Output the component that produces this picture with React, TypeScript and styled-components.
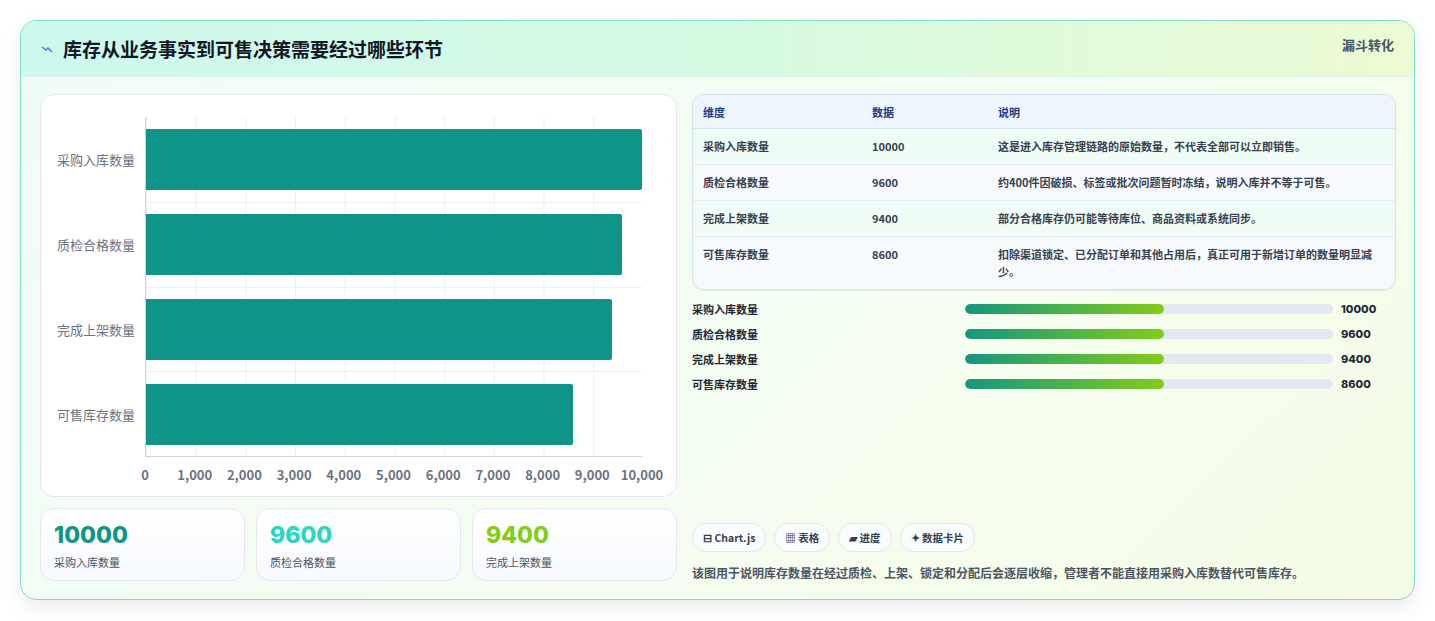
import styled, { createGlobalStyle } from 'styled-components';

const GlobalStyle = createGlobalStyle`
  html, body { margin: 0; padding: 0; background: #f3f4f6; }
  body { font-family: "Noto Sans CJK SC", "Noto Sans", sans-serif; color: #1f2937; }
`;

const rows = [
  { name: '采购入库数量', value: 10000, note: '这是进入库存管理链路的原始数量，不代表全部可以立即销售。' },
  { name: '质检合格数量', value: 9600, note: '约400件因破损、标签或批次问题暂时冻结，说明入库并不等于可售。' },
  { name: '完成上架数量', value: 9400, note: '部分合格库存仍可能等待库位、商品资料或系统同步。' },
  { name: '可售库存数量', value: 8600, note: '扣除渠道锁定、已分配订单和其他占用后，真正可用于新增订单的数量明显减少。' },
];

const ticks = [0, 1000, 2000, 3000, 4000, 5000, 6000, 7000, 8000, 9000, 10000];
const stats = [
  { v: '10000', label: '采购入库数量', color: '#0f9488' },
  { v: '9600', label: '质检合格数量', color: '#2dd4bf' },
  { v: '9400', label: '完成上架数量', color: '#84cc16' },
];

const Page = styled.div`
  background: #fff;
  padding: 20px 20px 21px 20px;
`;

const Card = styled.div`
  border: 1px solid #7fdcc9;
  border-radius: 16px;
  overflow: hidden;
  background: linear-gradient(135deg, #effcf9 0%, #f4fdf0 60%, #f5fde6 100%);
  box-shadow: 0 8px 20px rgba(0, 0, 0, 0.08);
`;

const Header = styled.div`
  height: 55px;
  display: flex;
  align-items: center;
  justify-content: space-between;
  padding: 0 20px 0 20px;
  background: linear-gradient(90deg, #cdf8ee 0%, #d7fae0 55%, #ecfbd3 100%);
  border-bottom: 1px solid #dff3ea;
`;

const Title = styled.h1`
  margin: 0;
  font-size: 19px;
  font-weight: 700;
  color: #111827;
  display: flex;
  align-items: center;
  gap: 10px;
`;

const Tag = styled.span`
  align-self: flex-start;
  margin-top: 14px;
  font-size: 13px;
  font-weight: 700;
  color: #475569;
`;

const Body = styled.div`
  display: grid;
  grid-template-columns: 637px 704px;
  gap: 15px;
  padding: 17px 19px 18px 19px;
`;

const Column = styled.div`
  display: flex;
  flex-direction: column;
`;

const ChartBox = styled.div`
  height: 403px;
  box-sizing: border-box;
  background: #fff;
  border: 1px solid #e5e7eb;
  border-radius: 14px;
  padding: 22px 34px 0 14px;
  display: grid;
  grid-template-columns: 90px 497px;
  grid-template-rows: 340px 30px;
`;

const YLabels = styled.div`
  display: grid;
  grid-template-rows: repeat(4, 1fr);
  font-size: 13px;
  color: #6b7280;
  text-align: right;
  padding-right: 10px;
`;

const YLabel = styled.div`
  display: flex;
  align-items: center;
  justify-content: flex-end;
`;

const Plot = styled.div`
  position: relative;
  border-left: 1px solid #d1d5db;
  border-bottom: 1px solid #d1d5db;
  display: grid;
  grid-template-rows: repeat(4, 1fr);
  background-image: linear-gradient(90deg, #eceef1 1px, transparent 1px);
  background-size: 49.7px 100%;
`;

const BarRow = styled.div`
  display: flex;
  align-items: center;
  border-top: 1px solid #eceef1;
  &:first-child { border-top: none; }
`;

const Bar = styled.div`
  height: 61px;
  background: #0e9488;
  border-radius: 0 2px 2px 0;
`;

const XLabels = styled.div`
  grid-column: 2;
  position: relative;
  font-size: 13px;
  font-weight: 700;
  color: #6b7280;
`;

const Tick = styled.span`
  position: absolute;
  top: 8px;
  transform: translateX(-50%);
`;

const Stats = styled.div`
  display: grid;
  grid-template-columns: repeat(3, 205px);
  gap: 11px;
  margin-top: 11px;
`;

const Stat = styled.div`
  height: 73px;
  box-sizing: border-box;
  border: 1px solid #e5e7eb;
  border-radius: 14px;
  background: linear-gradient(180deg, #ffffff, #f6f9fe);
  padding: 12px 13px;
`;

const StatValue = styled.div<{ $color: string }>`
  font-size: 23px;
  font-weight: 800;
  font-family: "Inter", "Noto Sans", sans-serif;
  color: ${(p) => p.$color};
  line-height: 28px;
`;

const StatLabel = styled.div`
  font-size: 11px;
  color: #4b5563;
  margin-top: 5px;
`;

const Table = styled.table`
  width: 100%;
  border-collapse: separate;
  border-spacing: 0;
  border: 1px solid #cfe3ea;
  border-radius: 12px;
  overflow: hidden;
  font-size: 11px;
  box-shadow: 0 1px 2px rgba(0,0,0,0.06);
  th {
    text-align: left;
    background: #edf5fd;
    color: #1e3a8a;
    font-weight: 700;
    height: 33px;
    padding: 0 10px;
    border-bottom: 1px solid #d6e2ee;
  }
  td {
    padding: 9px 10px;
    font-weight: 600;
    color: #374151;
    vertical-align: top;
    line-height: 17px;
    border-bottom: 1px solid #e3ebf2;
  }
  tr:last-child td { border-bottom: none; }
  tbody tr:nth-child(odd) { background: #f0fdf6; }
  tbody tr:nth-child(even) { background: #f7fafd; }
`;

const Progress = styled.div`
  margin-top: 10px;
  display: flex;
  flex-direction: column;
  gap: 7px;
`;

const ProgressRow = styled.div`
  display: grid;
  grid-template-columns: 265px 368px auto;
  align-items: center;
  gap: 8px;
  font-size: 11px;
  font-weight: 600;
  color: #1f2937;
  height: 18px;
`;

const Track = styled.div`
  height: 10px;
  background: #e2e8f0;
  border-radius: 5px;
  overflow: hidden;
`;

const Fill = styled.div`
  height: 100%;
  width: 54%;
  border-radius: 5px;
  background: linear-gradient(90deg, #159680, #83cc19);
`;

const PVal = styled.span`
  font-weight: 800;
  font-family: "Inter", sans-serif;
`;

const Chips = styled.div`
  margin-top: auto;
  display: flex;
  gap: 8px;
`;

const Chip = styled.span`
  height: 27px;
  padding: 0 10px;
  display: inline-flex;
  align-items: center;
  gap: 4px;
  border: 1px solid #e5e7eb;
  border-radius: 14px;
  background: #fafbfd;
  font-size: 10.5px;
  font-weight: 700;
  color: #334155;
`;

const Note = styled.p`
  margin: 12px 0 0;
  font-size: 12px;
  font-weight: 600;
  color: #4b5563;
`;

export default function App() {
  return (
    <Page>
      <GlobalStyle />
      <Card>
        <Header>
          <Title>
            <svg width="12" height="8" viewBox="0 0 12 8">
              <path d="M1 2 L5 5 L7 3 L11 7" stroke="#3b82f6" strokeWidth="1.5" fill="none" />
            </svg>
            库存从业务事实到可售决策需要经过哪些环节
          </Title>
          <Tag>漏斗转化</Tag>
        </Header>
        <Body>
          <Column>
            <ChartBox>
              <YLabels>
                {rows.map((r) => <YLabel key={r.name}>{r.name}</YLabel>)}
              </YLabels>
              <Plot>
                {rows.map((r) => (
                  <BarRow key={r.name}>
                    <Bar style={{ width: `${r.value / 100}%` }} />
                  </BarRow>
                ))}
              </Plot>
              <XLabels>
                {ticks.map((t) => (
                  <Tick key={t} style={{ left: `${t / 100}%` }}>{t.toLocaleString('en-US')}</Tick>
                ))}
              </XLabels>
            </ChartBox>
            <Stats>
              {stats.map((s) => (
                <Stat key={s.label}>
                  <StatValue $color={s.color}>{s.v}</StatValue>
                  <StatLabel>{s.label}</StatLabel>
                </Stat>
              ))}
            </Stats>
          </Column>
          <Column>
            <Table>
              <colgroup>
                <col style={{ width: 169 }} />
                <col style={{ width: 126 }} />
                <col />
              </colgroup>
              <thead>
                <tr><th>维度</th><th>数据</th><th>说明</th></tr>
              </thead>
              <tbody>
                {rows.map((r) => (
                  <tr key={r.name}><td>{r.name}</td><td>{r.value}</td><td>{r.note}</td></tr>
                ))}
              </tbody>
            </Table>
            <Progress>
              {rows.map((r) => (
                <ProgressRow key={r.name}>
                  <span>{r.name}</span>
                  <Track><Fill /></Track>
                  <PVal>{r.value}</PVal>
                </ProgressRow>
              ))}
            </Progress>
            <Chips>
              <Chip>⊟ Chart.js</Chip>
              <Chip>▦ 表格</Chip>
              <Chip>▰ 进度</Chip>
              <Chip>✦ 数据卡片</Chip>
            </Chips>
            <Note>该图用于说明库存数量在经过质检、上架、锁定和分配后会逐层收缩，管理者不能直接用采购入库数替代可售库存。</Note>
          </Column>
        </Body>
      </Card>
    </Page>
  );
}
